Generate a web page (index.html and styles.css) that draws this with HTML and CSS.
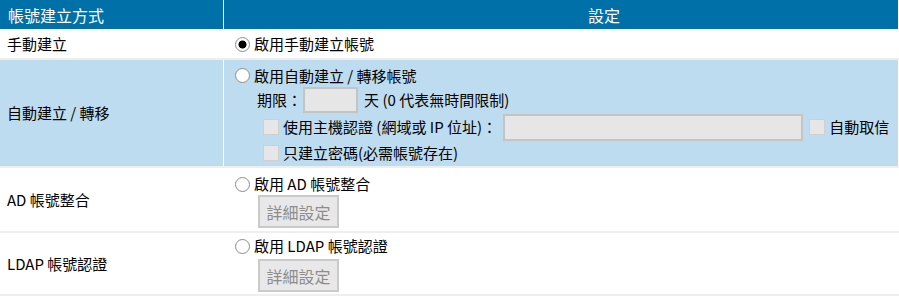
FILE: index.html
```html
<!DOCTYPE html>
<html lang="zh-Hant">
<head>
  <meta charset="UTF-8" />
  <meta name="viewport" content="width=device-width, initial-scale=1.0"/>
  <title>帳號建立方式</title>
  <link rel="stylesheet" href="styles.css">
</head>
<body>

  <!-- Account creation settings -->
  <table class="setting-table">
    <tr>
      <th class="col-name">帳號建立方式</th>
      <th class="col-set">設定</th>
    </tr>

    <tr class="row-manual">
      <td class="name">手動建立</td>
      <td class="set">
        <label class="line"><input type="radio" name="mode" checked>啟用手動建立帳號</label>
      </td>
    </tr>

    <tr class="row-auto">
      <td class="name">自動建立 / 轉移</td>
      <td class="set">
        <label class="line first"><input type="radio" name="mode">啟用自動建立 / 轉移帳號</label>
        <div class="line sub period">
          期限：<input type="text" class="txt-days" disabled><span class="after">天 (0 代表無時間限制)</span>
        </div>
        <div class="line sub host">
          <input type="checkbox" disabled>使用主機認證 (網域或 IP 位址)：<input type="text" class="txt-host" disabled><input type="checkbox" class="chk-mail" disabled>自動取信
        </div>
        <div class="line sub pwd">
          <input type="checkbox" disabled>只建立密碼(必需帳號存在)
        </div>
      </td>
    </tr>

    <tr class="row-ad">
      <td class="name">AD 帳號整合</td>
      <td class="set">
        <label class="line"><input type="radio" name="mode">啟用 AD 帳號整合</label>
        <div class="sub btn-line"><button class="btn-detail" disabled>詳細設定</button></div>
      </td>
    </tr>

    <tr class="row-ldap">
      <td class="name">LDAP 帳號認證</td>
      <td class="set">
        <label class="line"><input type="radio" name="mode">啟用 LDAP 帳號認證</label>
        <div class="sub btn-line"><button class="btn-detail" disabled>詳細設定</button></div>
      </td>
    </tr>
  </table>

</body>
</html>
```

FILE: styles.css
```css
body {
  margin: 0;
  padding: 0;
  font-family: "Noto Sans CJK TC", "Noto Sans", sans-serif;
  font-size: 15px;
  line-height: 20px;
  color: #000;
  background: #fff;
}
.setting-table {
  width: 100%;
  border-collapse: collapse;
}
.setting-table th {
  background: #0070a8;
  color: #fff;
  font-weight: normal;
  font-size: 16px;
  height: 29px;
  padding: 0;
  border-right: 1px solid #fff;
}
.col-name {
  width: 215px;
  text-align: left;
  padding-left: 8px !important;
}
.col-set {
  text-align: center;
  padding-left: 86px !important;
}
.setting-table td {
  padding: 0;
  border-bottom: 2px solid #eee;
  border-right: 1px solid #fff;
}
.name {
  padding-left: 7px !important;
  vertical-align: middle;
}
.set {
  padding-left: 11px !important;
  vertical-align: top;
}
.row-manual .set {
  padding-top: 4px !important;
  padding-bottom: 3px !important;
}
.row-auto td {
  background: #bedcf0;
}
.row-auto .set {
  padding-top: 4px !important;
  padding-bottom: 1px !important;
}
.row-ad .set {
  padding-top: 5px !important;
  padding-bottom: 3px !important;
}
.row-ldap .set {
  padding-top: 2px !important;
  padding-bottom: 2px !important;
}
.row-ldap .btn-line {
  margin-top: 2px;
}
.line {
  display: flex;
  align-items: center;
  height: 22px;
  white-space: nowrap;
}
.sub {
  margin-left: 22px;
}
.btn-line {
  display: flex;
  margin-left: 23px;
}
.row-auto .first {
  height: 23px;
}
.row-auto .period {
  height: 26px;
}
.row-auto .host {
  height: 28px;
  margin-left: 28px;
}
.row-auto .pwd {
  height: 24px;
  margin-left: 28px;
}

/* radios */
input[type="radio"] {
  appearance: none;
  width: 15px;
  height: 15px;
  margin: 0 4px 0 0;
  border: 1px solid #8c8c8c;
  border-radius: 50%;
  background: #fff;
  flex: none;
}
input[type="radio"]:checked {
  background: radial-gradient(circle, #000 0 3.6px, #fff 4.4px);
}

/* checkboxes */
input[type="checkbox"] {
  appearance: none;
  width: 16px;
  height: 16px;
  margin: 0 4px 0 0;
  border: 1px solid #cfcfcf;
  background: #e6e6e6;
  flex: none;
}
.chk-mail {
  margin-left: 6px !important;
}

/* text inputs */
input[type="text"] {
  box-sizing: border-box;
  border: 2px solid #c4c4c4;
  background: #e6e6e6;
  margin: 0;
  padding: 0;
  flex: none;
}
.txt-days {
  width: 55px;
  height: 26px;
  margin-left: 1px !important;
}
.after {
  margin-left: 6px;
}
.txt-host {
  width: 300px;
  height: 27px;
  margin-left: 6px !important;
}

.btn-detail {
  box-sizing: border-box;
  width: 81px;
  height: 33px;
  margin: 0;
  padding: 0;
  border: 2px solid #cacaca;
  background: #e8e8e8;
  color: #8c8c8c;
  font-family: "Noto Sans CJK TC", sans-serif;
  font-size: 16px;
}
```
